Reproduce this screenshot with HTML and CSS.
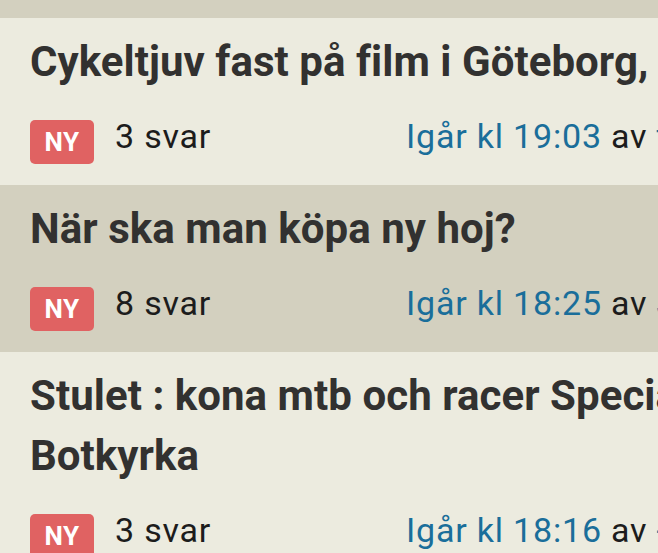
FILE: index.html
```html
<!DOCTYPE html>
<html lang="sv">
<head>
    <meta charset="UTF-8">
    <meta name="viewport" content="width=device-width, initial-scale=1.0">
    <title>Trådar</title>
    <link rel="stylesheet" href="styles.css">
</head>
<body>
    <div class="thread-list">
        <div class="thread-edge"></div>
        <div class="thread">
            <a class="thread-title" href="#">Cykeltjuv fast på film i Göteborg, tips</a>
            <div class="thread-meta">
                <div class="meta-left">
                    <span class="badge">NY</span>
                    <span class="replies">3 svar</span>
                </div>
                <div class="meta-right">
                    <a class="date" href="#">Igår kl 19:03</a> av <a class="user" href="#">tjuvjakt</a>
                </div>
            </div>
        </div>
        <div class="thread alt">
            <a class="thread-title" href="#">När ska man köpa ny hoj?</a>
            <div class="thread-meta">
                <div class="meta-left">
                    <span class="badge">NY</span>
                    <span class="replies">8 svar</span>
                </div>
                <div class="meta-right">
                    <a class="date" href="#">Igår kl 18:25</a> av <a class="user" href="#">Johan_M</a>
                </div>
            </div>
        </div>
        <div class="thread">
            <a class="thread-title" href="#">Stulet : kona mtb och racer Specialized i Botkyrka</a>
            <div class="thread-meta">
                <div class="meta-left">
                    <span class="badge">NY</span>
                    <span class="replies">3 svar</span>
                </div>
                <div class="meta-right">
                    <a class="date" href="#">Igår kl 18:16</a> av <a class="user" href="#">-cyklist-</a>
                </div>
            </div>
        </div>
    </div>
</body>
</html>
```

FILE: styles.css
```css
body {
    margin: 0;
    font-family: Roboto, "Liberation Sans", sans-serif;
    background-color: #ecebdf;
    overflow: hidden;
}
a {
    text-decoration: none;
}
.thread-list {
    width: 860px;
}
.thread-edge {
    height: 18px;
    background-color: #d3d0bf;
}
.thread {
    padding: 14px 30px 21px 30px;
    background-color: #ecebdf;
}
.thread.alt {
    background-color: #d3d0bf;
}
.thread-title {
    display: block;
    font-size: 42px;
    line-height: 60px;
    letter-spacing: 0.05px;
    font-weight: bold;
    color: #323130;
}
.thread-meta {
    display: grid;
    grid-template-columns: 376px 1fr;
    margin-top: 28px;
    font-size: 34px;
    line-height: 33px;
    letter-spacing: 0.8px;
    color: #1c1c1c;
    white-space: nowrap;
}
.meta-left {
    display: flex;
    align-items: flex-start;
}
.badge {
    width: 64px;
    height: 44px;
    line-height: 44px;
    text-align: center;
    font-size: 26px;
    letter-spacing: 0.5px;
    font-weight: bold;
    color: #fff;
    background-color: #e06262;
    border-radius: 5px;
}
.replies {
    margin-left: 21px;
}
.date,
.user {
    color: #1a6e9a;
}
```
